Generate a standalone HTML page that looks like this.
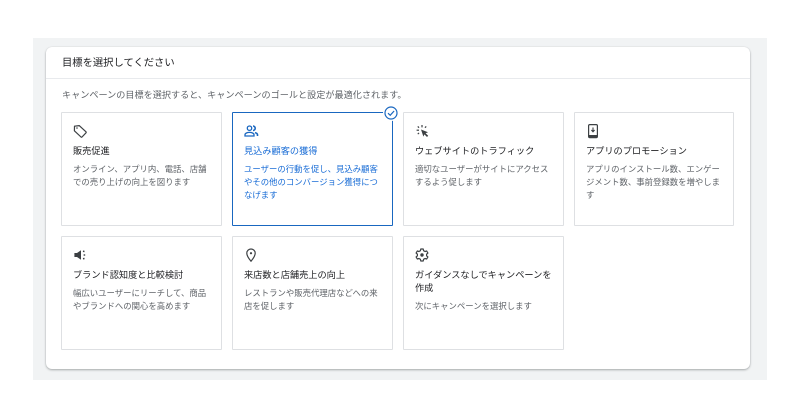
<!DOCTYPE html>
<html lang="ja">
<head>
<meta charset="utf-8">
<style>
html,body{margin:0;padding:0;width:800px;height:418px;background:#fff;overflow:hidden}
body{font-family:"Liberation Sans","Noto Sans CJK JP",sans-serif;position:relative}
.wrap{position:absolute;left:0;top:0;width:800px;height:418px;background:#fff;filter:blur(.35px)}
.bg{position:absolute;left:33px;top:38px;width:734px;height:342px;background:#f1f3f4}
.panel{position:absolute;left:46px;top:47px;width:704px;height:322px;background:#fff;border-radius:6px;box-shadow:0 1px 2px rgba(60,64,67,.4),0 0 1px rgba(60,64,67,.15)}
.line{position:absolute;left:46px;top:78px;width:704px;height:1px;background:#e8eaed}
.t{position:absolute;white-space:nowrap}
.title{left:62px;top:55px;font-size:10.3px;line-height:14px;color:#202124;transform:translateY(2px)}
.sub{left:62px;top:87.5px;font-size:9.13px;line-height:14px;color:#5f6368}
.c{position:absolute;box-sizing:border-box;width:161px;height:114px;background:#fff;border:1px solid #dee0e3;border-radius:1px}
.c svg{position:absolute;left:10px;top:10px;width:16px;height:16px}
.h{position:absolute;left:11px;top:31.5px;font-size:9.2px;line-height:13px;color:#202124;white-space:nowrap}
.d{position:absolute;left:11px;top:50px;font-size:8.4px;line-height:13px;color:#5f6368;white-space:nowrap}
.sel{border:1px solid #1967c0}
.sel .h,.sel .d{color:#1a6dd6}
</style>
</head>
<body>
<div class="wrap">
<div class="bg"></div>
<div class="panel"></div>
<div class="line"></div>
<div class="t title">目標を選択してください</div>
<div class="t sub">キャンペーンの目標を選択すると、キャンペーンのゴールと設定が最適化されます。</div>

<div class="c" style="left:61px;top:112px">
<svg viewBox="0 0 16 16" fill="none" stroke="#3c4043" stroke-width="1.2"><path d="M2.5 3.2 L7.2 2.6 L14 8.8 Q14.4 9.3 14 9.8 L10 14 Q9.5 14.4 9 14 L2.4 7.8 Z" stroke-linejoin="round"/><circle cx="5" cy="5" r=".8" fill="#3c4043" stroke="none"/></svg>
<div class="h">販売促進</div>
<div class="d">オンライン、アプリ内、電話、店舗<br>での売り上げの向上を図ります</div>
</div>

<div class="c sel" style="left:232px;top:112px;overflow:visible">
<svg viewBox="0 0 16 16" fill="none" stroke="#1a67c0" stroke-width="1.3"><circle cx="6.5" cy="5.2" r="2.2"/><path d="M2 13 V11.8 C2 10.2 4.3 9.4 6.5 9.4 C8.7 9.4 11 10.2 11 11.8 V13 Z"/><path d="M10 3 A2.2 2.2 0 0 1 10 7.4" stroke-width="1.6"/><path d="M12 9.6 C13.4 10 14.5 10.7 14.5 11.8 V13" stroke-width="1.6"/></svg>
<div class="h">見込み顧客の獲得</div>
<div class="d">ユーザーの行動を促し、見込み顧客<br>やその他のコンバージョン獲得につ<br>なげます</div>
</div>
<svg style="position:absolute;left:383px;top:105px;width:16px;height:16px" viewBox="0 0 16 16"><circle cx="8" cy="8" r="8" fill="#fff"/><circle cx="8" cy="8" r="6" fill="#fff" stroke="#1967c0" stroke-width="1.2"/><path d="M5 8.2 L7.2 10.3 L11.1 6" fill="none" stroke="#1967c0" stroke-width="1.2"/></svg>

<div class="c" style="left:403px;top:112px">
<svg viewBox="0 0 16 16" fill="#3c4043"><path d="M7 6.5 L14 9.2 L11.6 10.2 L14.2 12.8 L13 14 L10.4 11.4 L9.4 13.6 Z"/><rect x="7.4" y="2" width="1.2" height="2.4"/><rect x="2.6" y="6.6" width="2.4" height="1.2"/><rect x="11" y="3.2" width="1.2" height="1.8" transform="rotate(45 11.6 4.1)"/><rect x="3.8" y="3.2" width="1.2" height="1.8" transform="rotate(-45 4.4 4.1)"/><rect x="3.8" y="9.6" width="1.2" height="1.8" transform="rotate(45 4.4 10.5)"/></svg>
<div class="h">ウェブサイトのトラフィック</div>
<div class="d">適切なユーザーがサイトにアクセス<br>するよう促します</div>
</div>

<div class="c" style="left:574px;top:112px;width:160px">
<svg viewBox="0 0 16 16" fill="none"><rect x="3.6" y="1.6" width="8.8" height="13" rx="1.2" stroke="#3c4043" stroke-width="1.2"/><rect x="3.6" y="12" width="8.8" height="2.6" fill="#3c4043"/><path d="M8 4.5 V8.5 M6.4 7 L8 8.8 L9.6 7" stroke="#3c4043" stroke-width="1.1"/></svg>
<div class="h">アプリのプロモーション</div>
<div class="d">アプリのインストール数、エンゲー<br>ジメント数、事前登録数を増やしま<br>す</div>
</div>

<div class="c" style="left:61px;top:236px">
<svg viewBox="0 0 16 16" fill="#3c4043"><path d="M2.4 6 H5 L9 3.2 V12.8 L5 10 H2.4 Z"/><rect x="11" y="3.6" width="1.5" height="1.5" transform="rotate(20 11.7 4.3)"/><rect x="11.6" y="7.3" width="1.6" height="1.4"/><rect x="11" y="10.9" width="1.5" height="1.5" transform="rotate(-20 11.7 11.6)"/></svg>
<div class="h">ブランド認知度と比較検討</div>
<div class="d">幅広いユーザーにリーチして、商品<br>やブランドへの関心を高めます</div>
</div>

<div class="c" style="left:232px;top:236px">
<svg viewBox="0 0 16 16" fill="none" stroke="#3c4043" stroke-width="1.2"><path d="M8 14.2 C6 11.8 3.8 9.2 3.8 6.2 A4.2 4.2 0 0 1 12.2 6.2 C12.2 9.2 10 11.8 8 14.2 Z"/><circle cx="8" cy="6.2" r="1.1" fill="#3c4043" stroke="none"/></svg>
<div class="h">来店数と店舗売上の向上</div>
<div class="d">レストランや販売代理店などへの来<br>店を促します</div>
</div>

<div class="c" style="left:403px;top:236px">
<svg viewBox="0 0 16 16" fill="none" stroke="#3c4043" stroke-width="1.2" stroke-linejoin="round"><path d="M6.8 2 H9.2 L9.6 3.7 L11 4.5 L12.7 4 L13.9 6 L12.6 7.2 V8.8 L13.9 10 L12.7 12 L11 11.5 L9.6 12.3 L9.2 14 H6.8 L6.4 12.3 L5 11.5 L3.3 12 L2.1 10 L3.4 8.8 V7.2 L2.1 6 L3.3 4 L5 4.5 L6.4 3.7 Z"/><circle cx="8" cy="8" r="1.7" fill="#3c4043" stroke="none"/></svg>
<div class="h">ガイダンスなしでキャンペーンを<br>作成</div>
<div class="d" style="top:63px">次にキャンペーンを選択します</div>
</div>
</div>
</body>
</html>
